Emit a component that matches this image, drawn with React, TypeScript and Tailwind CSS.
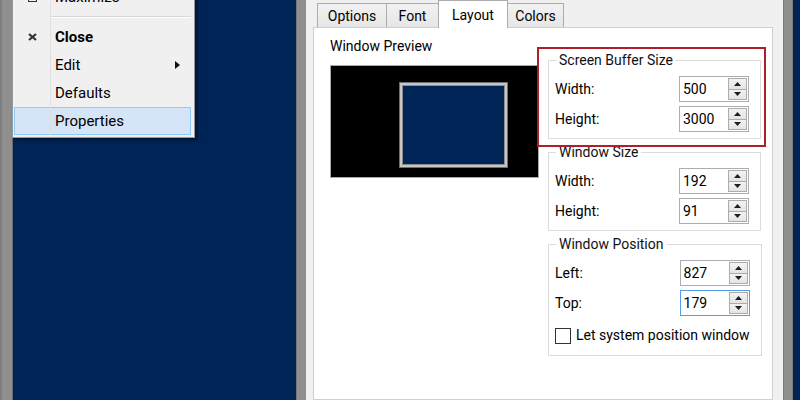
import React from "react";

const FONT = { fontFamily: "Roboto, 'Noto Sans', Arial, sans-serif" };

function UpArrow() {
  return (
    <svg width="7" height="4" viewBox="0 0 7 4">
      <path d="M3.5 0L7 4H0z" fill="#1e1e1e" />
    </svg>
  );
}

function DownArrow() {
  return (
    <svg width="7" height="4" viewBox="0 0 7 4">
      <path d="M0 0h7L3.5 4z" fill="#1e1e1e" />
    </svg>
  );
}

function Spinner({ value, focused }: { value: string; focused?: boolean }) {
  return (
    <div
      className={
        focused
          ? "flex h-[26px] w-[70px] border border-[#569de5] bg-white"
          : "flex h-[26px] w-[70px] border border-[#abadb3] bg-white"
      }
    >
      <div className="flex-1 pl-[3px] text-[14px] leading-[24px] text-black">{value}</div>
      <div className="flex w-[20px] flex-col py-[1px] pr-[1px]">
        <div className="flex flex-1 items-center justify-center border border-[#acacac] bg-gradient-to-b from-[#f3f3f3] to-[#e4e4e4]">
          <UpArrow />
        </div>
        <div className="-mt-px flex flex-1 items-center justify-center border border-[#acacac] bg-gradient-to-b from-[#f3f3f3] to-[#e4e4e4]">
          <DownArrow />
        </div>
      </div>
    </div>
  );
}

function Row({ label, value, focused }: { label: string; value: string; focused?: boolean }) {
  return (
    <div className="flex h-[26px] items-center justify-between">
      <span className="text-[14px] text-black">{label}</span>
      <Spinner value={value} focused={focused} />
    </div>
  );
}

function Group({ title, children, last }: { title: string; children: React.ReactNode; last?: boolean }) {
  return (
    <fieldset
      className={
        last
          ? "border border-[#dcdcdc] pb-[11px] pl-[6px] pr-[11px] pt-[7px]"
          : "border border-[#dcdcdc] pb-[6px] pl-[6px] pr-[11px] pt-[7px]"
      }
    >
      <legend className="ml-[1px] whitespace-nowrap px-[3px] text-[14px] leading-[18px] text-[#111]">{title}</legend>
      {children}
    </fieldset>
  );
}

function Tab({ label, width, active }: { label: string; width: string; active?: boolean }) {
  if (active) {
    return (
      <div
        className={`relative z-10 -mb-px -ml-px flex h-[28px] items-start justify-center border border-b-0 border-[#acacac] bg-white pt-[4px] text-[14px] text-black ${width}`}
      >
        {label}
      </div>
    );
  }
  return (
    <div
      className={`-ml-px flex h-[24px] items-center justify-center border border-b-0 border-[#acacac] bg-gradient-to-b from-[#f2f2f2] to-[#e6e6e6] pt-px text-[14px] text-black ${width}`}
    >
      {label}
    </div>
  );
}

function MenuRow({
  children,
  icon,
  bold,
  arrow,
  selected,
}: {
  children: React.ReactNode;
  icon?: React.ReactNode;
  bold?: boolean;
  arrow?: boolean;
  selected?: boolean;
}) {
  return (
    <div
      className={
        selected
          ? "flex h-[28px] items-center border border-[#90c8f6] bg-[#d3e5f6]"
          : "flex h-[28px] items-center border border-transparent"
      }
    >
      <div className="flex w-[35px] items-center justify-center">{icon}</div>
      <span className={bold ? "flex-1 pl-[5px] text-[15px] font-bold" : "flex-1 pl-[5px] text-[15px]"}>
        {children}
      </span>
      {arrow && (
        <svg className="mr-[10px]" width="5" height="8" viewBox="0 0 5 8">
          <path d="M0 0l5 4-5 4z" fill="#111" />
        </svg>
      )}
    </div>
  );
}

function SystemMenu() {
  return (
    <div className="absolute left-[-1px] top-[-20px] z-20 w-[183px] border border-[#979797] bg-[#f0f0f0] py-[2px] pl-px pr-[3px] text-black shadow-[2px_2px_3px_rgba(0,0,0,0.45)]">
      {/* icon column divider */}
      <div className="absolute bottom-[2px] left-[37px] top-[2px] z-10 w-[2px] border-l border-[#e0e0e0]" />
      <MenuRow
        icon={
          <svg width="9" height="9" viewBox="0 0 9 9">
            <rect x="0.5" y="0.5" width="8" height="8" fill="none" stroke="#333" />
            <rect x="0" y="0" width="9" height="3" fill="#333" />
          </svg>
        }
      >
        Maximize
      </MenuRow>
      <div className="flex h-[12px] items-center pl-[37px]">
        <div className="h-[2px] flex-1 border-t border-[#d7d7d7] bg-white" />
      </div>
      <MenuRow
        bold
        icon={
          <svg width="9" height="8" viewBox="0 0 9 8">
            <path d="M1 1l7 6M8 1L1 7" stroke="#333" strokeWidth="2.2" />
          </svg>
        }
      >
        Close
      </MenuRow>
      <MenuRow arrow>Edit</MenuRow>
      <MenuRow>Defaults</MenuRow>
      <MenuRow selected>Properties</MenuRow>
    </div>
  );
}

function PreviewBox() {
  return (
    <div className="relative h-[113px] w-[209px] border border-[#a8a8a8] bg-black">
      <div className="absolute left-[68px] top-[16px] h-[86px] w-[109px] border border-[#6e6e6e] bg-[#c6c6c6] p-[2px]">
        <div className="h-full w-full border border-[#8c8c8c] bg-[#012456]" />
      </div>
    </div>
  );
}

export default function App() {
  return (
    <div className="flex h-[400px] w-[800px] overflow-hidden bg-[#012456]" style={FONT}>
      {/* console window frame, left */}
      <div className="w-[13px] border-l-2 border-r border-l-[#7e7e7e] border-r-[#6a6a6a] bg-[#8f8f8f]" />
      {/* console client area with system menu */}
      <div className="relative w-[283px] bg-[#012456]">
        <SystemMenu />
      </div>
      {/* console window frame, right */}
      <div className="w-[10px] border-l border-[#777] bg-[#8f8f8f]" />

      {/* properties dialog */}
      <div className="flex w-[477px] flex-col bg-[#f0f0f0]">
        <div className="flex h-[27px] items-end pl-[12px]">
          <Tab label="Options" width="w-[70px]" />
          <Tab label="Font" width="w-[53px]" />
          <Tab label="Layout" width="w-[70px]" active />
          <Tab label="Colors" width="w-[57px]" />
        </div>
        <div className="relative ml-[7px] mr-[10px] flex flex-1 border border-[#cfcfcf] bg-white pl-[16px]">
          <div className="flex w-[218px] flex-col pt-[9px]">
            <div className="h-[18px] text-[14px] leading-[18px] text-black">Window Preview</div>
            <div className="mt-[10px]">
              <PreviewBox />
            </div>
          </div>
          <div className="flex w-[213px] flex-col gap-[4px] pt-[23px]">
            <Group title="Screen Buffer Size">
              <div className="flex flex-col gap-[4px]">
                <Row label="Width:" value="500" />
                <Row label="Height:" value="3000" />
              </div>
            </Group>
            <Group title="Window Size">
              <div className="flex flex-col gap-[4px]">
                <Row label="Width:" value="192" />
                <Row label="Height:" value="91" />
              </div>
            </Group>
            <Group title="Window Position" last>
              <div className="flex flex-col gap-[4px]">
                <Row label="Left:" value="827" />
                <Row label="Top:" value="179" focused />
              </div>
              <label className="mt-[11px] flex h-[17px] items-center gap-[5px] whitespace-nowrap text-[14px] text-black">
                <span className="h-[16px] w-[16px] shrink-0 border border-[#333] bg-white" />
                Let system position window
              </label>
            </Group>
          </div>
          {/* highlight around the buffer size group */}
          <div className="pointer-events-none absolute left-[223px] top-[19px] h-[100px] w-[229px] border-2 border-[#ae1f2b]" />
        </div>
      </div>

      {/* dialog frame, right */}
      <div className="w-[10px] border-x border-x-[#7a7a7a] bg-[#8f8f8f]" />
      <div className="flex-1 bg-[#012456]" />
    </div>
  );
}
